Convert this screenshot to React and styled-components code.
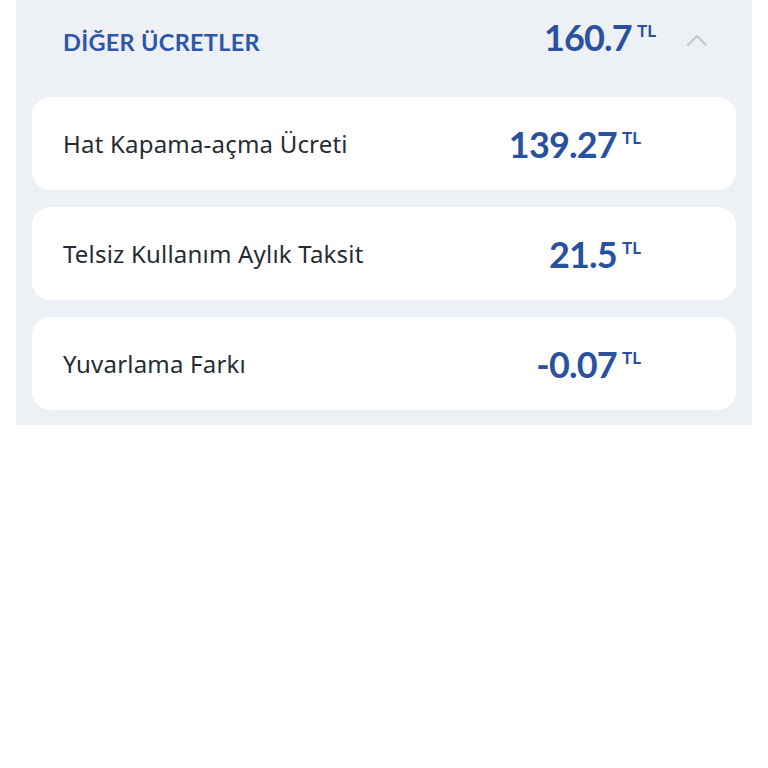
import React from 'react'
import styled, {createGlobalStyle} from 'styled-components'

const GlobalStyle = createGlobalStyle`
  html, body {
    margin: 0;
    padding: 0;
    background: #ffffff;
  }
  body {
    font-family: "Lato", "Noto Sans", sans-serif;
  }
`

const Page = styled.div`
  width: 768px;
  height: 768px;
  background: #ffffff;
`

const Panel = styled.section`
  margin: 0 16px;
  background: #edf0f4;
  padding: 0 16px 15px 16px;
  display: flex;
  flex-direction: column;
  gap: 17px;
`

const Header = styled.div`
  display: flex;
  align-items: baseline;
  height: 80px;
  padding: 19px 28px 0 31px;
  box-sizing: border-box;
`

const Title = styled.h2`
  flex: 1;
  margin: 0;
  font-size: 23.5px;
  font-weight: 700;
  color: #2d57a8;
  letter-spacing: 0.3px;
`

const Amount = styled.div`
  display: flex;
  align-items: flex-start;
  color: #2a51a0;
  font-weight: 700;
`

const Number = styled.span`
  font-size: 36px;
  line-height: 1;
  letter-spacing: -0.8px;
`

const Currency = styled.span`
  font-size: 17px;
  margin-left: 5px;
  margin-top: 3px;
  line-height: 1;
`

const Chevron = styled.svg`
  align-self: flex-start;
  margin-left: 30px;
  margin-top: 14px;
  width: 22px;
  height: 14px;
`

const Card = styled.div`
  background: #ffffff;
  border-radius: 18px;
  height: 93px;
  display: flex;
  align-items: center;
  padding: 0 95px 0 31px;
`

const Label = styled.div`
  flex: 1;
  font-family: "Noto Sans", "Lato", sans-serif;
  font-size: 24px;
  letter-spacing: 0.2px;
  color: #272c33;
`

const rows = [
  {label: 'Hat Kapama-açma Ücreti', value: '139.27'},
  {label: 'Telsiz Kullanım Aylık Taksit', value: '21.5'},
  {label: 'Yuvarlama Farkı', value: '-0.07'}
]

const App = () => {
  return (
    <Page>
      <GlobalStyle />
      <Panel>
        <Header>
          <Title>DİĞER ÜCRETLER</Title>
          <Amount>
            <Number>160.7</Number>
            <Currency>TL</Currency>
          </Amount>
          <Chevron viewBox="0 0 22 14">
            <path d="M2 12 L11 3 L20 12" fill="none" stroke="#c3c7ce" strokeWidth="2.2" strokeLinecap="round" strokeLinejoin="round" />
          </Chevron>
        </Header>
        {rows.map(r => (
          <Card key={r.label}>
            <Label>{r.label}</Label>
            <Amount>
              <Number>{r.value}</Number>
              <Currency>TL</Currency>
            </Amount>
          </Card>
        ))}
      </Panel>
    </Page>
  )
}

export default App
